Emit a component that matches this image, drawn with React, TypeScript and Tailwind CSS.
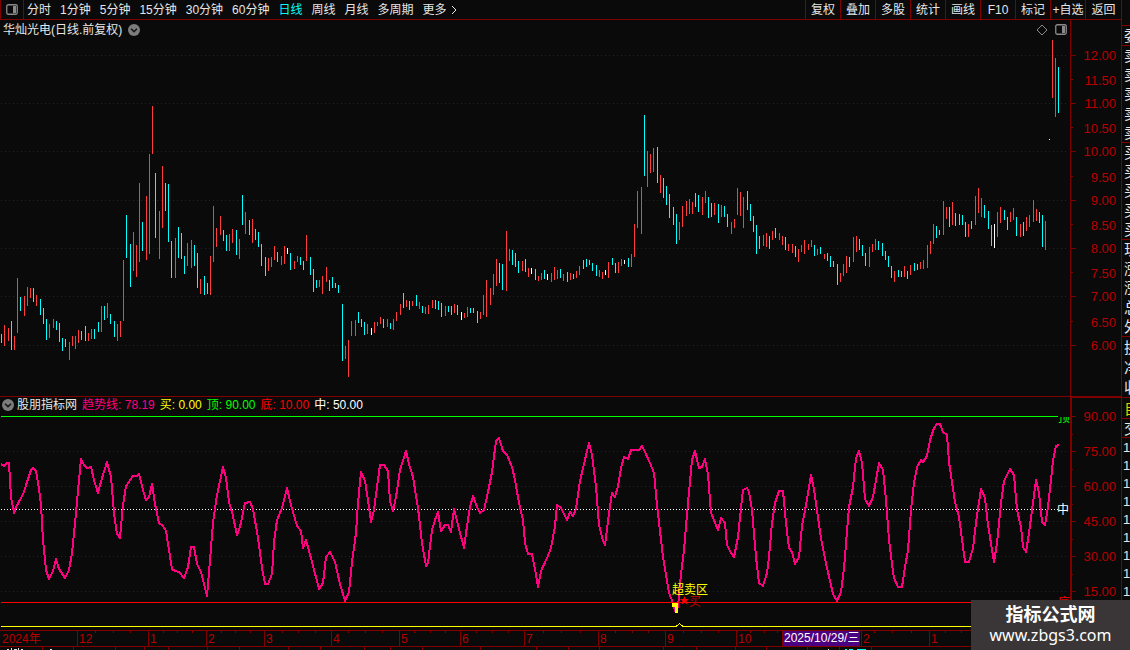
import React from "react";

const UI_FONT = "font-['Liberation_Sans','Noto_Sans_CJK_SC',sans-serif]";

const PERIODS = ["分时", "1分钟", "5分钟", "15分钟", "30分钟", "60分钟", "日线", "周线", "月线", "多周期"];
const TOOLS = ["复权", "叠加", "多股", "统计", "画线", "F10", "标记", "+自选", "返回"];

const INDICATORS = [
  { name: "趋势线", value: "78.19", tone: "text-[#ff0080]" },
  { name: "买", value: "0.00", tone: "text-[#ffff00]" },
  { name: "顶", value: "90.00", tone: "text-[#00ff00]" },
  { name: "底", value: "10.00", tone: "text-[#ff0000]" },
  { name: "中", value: "50.00", tone: "text-white" },
];

// Each bar: x, top, bottom, colour key (r = up, c = down, w = flat)
const BARS = `1 334 343 c,4 325 346 r,8 328 341 r,11 321 350 c,14 336 350 r,17 278 333 r,20 297 311 c,24 296 316 r,27 287 306 r,30 288 298 r,33 288 302 c,36 295 306 r,40 299 315 c,43 308 324 c,46 319 340 c,49 324 338 r,53 319 328 r,56 321 330 c,59 323 342 c,62 338 351 c,65 339 347 c,69 342 360 r,72 336 346 r,75 336 349 r,78 330 343 r,81 331 340 c,85 326 341 c,88 333 341 r,91 329 339 r,94 329 339 c,98 322 332 c,101 306 332 r,104 306 320 c,107 303 318 r,110 314 324 c,114 321 337 c,117 324 341 r,120 321 337 r,123 260 321 r,126 215 258 c,130 244 287 c,133 232 271 r,136 245 277 r,139 183 262 r,142 222 251 c,146 196 260 r,149 154 254 r,152 106 154 r,155 173 238 c,159 211 259 r,162 166 228 r,165 183 211 c,168 184 242 c,171 241 278 c,175 238 278 r,178 227 258 c,181 233 259 c,184 256 274 c,187 243 266 r,191 240 268 r,194 245 266 c,197 253 288 c,200 279 294 r,204 276 295 c,207 283 294 c,210 256 295 r,213 206 262 r,216 228 247 r,220 216 235 r,223 230 241 c,226 235 251 c,229 234 251 r,232 229 243 r,236 230 255 c,239 239 259 r,242 195 225 c,245 212 234 r,249 220 235 c,252 219 243 r,255 229 240 c,258 232 247 c,261 244 266 c,265 257 276 c,268 258 271 r,271 257 267 r,274 246 260 r,277 252 262 c,281 256 265 r,284 246 264 r,287 248 254 w,290 253 270 c,294 261 269 r,297 256 262 r,300 257 265 c,303 261 270 c,306 235 261 r,310 257 275 c,313 269 292 c,316 280 288 c,319 280 287 r,322 276 294 r,326 267 282 r,329 280 291 c,332 277 288 c,335 283 288 c,338 285 293 c,342 304 361 c,345 346 359 r,348 340 377 r,351 321 336 r,355 320 336 r,358 312 323 c,361 319 327 c,364 322 335 c,367 324 334 r,371 328 335 w,374 322 333 r,377 322 326 r,380 317 324 r,383 319 328 c,387 319 327 r,390 323 329 c,393 319 330 r,396 312 321 r,400 304 315 r,403 293 308 c,406 300 307 r,409 301 310 c,412 301 306 r,416 295 306 c,419 302 309 r,422 306 313 c,425 307 314 r,428 305 314 r,432 300 308 r,435 300 309 c,438 301 310 c,441 303 317 c,445 306 316 r,448 306 312 c,451 306 315 c,454 304 313 r,457 305 315 c,461 312 320 w,464 313 318 r,467 307 317 r,470 308 313 c,473 308 313 c,477 311 323 c,480 312 319 r,483 295 315 r,486 280 317 r,490 288 305 r,493 274 295 r,496 259 286 r,499 263 283 c,502 264 290 c,506 231 291 r,509 249 261 r,512 250 265 c,515 253 267 c,518 261 273 c,522 261 271 r,525 259 272 c,528 268 277 r,531 268 274 w,535 269 280 c,538 276 281 r,541 273 280 r,544 270 279 c,547 274 280 w,551 273 282 r,554 267 280 r,557 270 279 r,560 269 278 c,563 274 281 r,567 272 282 c,570 273 280 r,573 274 279 c,576 271 278 r,579 266 275 r,583 260 269 c,586 259 267 c,589 260 265 c,592 263 271 c,596 265 276 c,599 270 277 r,602 272 279 r,605 270 275 w,608 262 278 r,612 258 265 c,615 263 273 c,618 262 273 r,621 259 266 r,624 260 264 w,628 258 267 c,631 254 267 r,634 224 257 r,637 191 228 r,641 187 234 r,644 115 176 c,647 151 187 r,650 154 173 r,653 148 172 r,657 147 183 c,660 175 193 r,663 178 198 c,666 186 205 c,669 194 218 c,673 207 225 c,676 214 244 c,679 222 240 r,682 206 227 r,686 201 216 r,689 199 214 r,692 202 214 r,695 193 207 c,698 195 212 c,702 197 215 r,705 191 203 r,708 197 218 c,711 203 217 c,714 203 215 r,718 204 223 c,721 205 217 r,724 206 217 c,727 214 227 c,731 222 234 r,734 219 228 r,737 188 215 r,740 192 216 r,743 197 228 r,747 191 210 c,750 204 221 c,753 216 232 c,756 225 254 c,759 236 249 c,763 235 246 r,766 233 247 r,769 236 249 c,772 231 240 r,775 228 238 c,779 233 240 r,782 236 245 r,785 237 250 c,788 244 251 r,792 244 253 r,795 246 257 c,798 249 262 r,801 245 252 r,804 240 254 r,808 244 250 r,811 240 247 r,814 245 256 c,817 249 255 r,820 247 254 c,824 254 259 r,827 253 261 c,830 256 267 c,833 261 267 c,837 264 285 c,840 273 282 r,843 264 276 r,846 256 273 r,849 257 267 c,853 237 262 r,856 236 252 r,859 239 250 c,862 245 256 c,865 253 266 c,869 247 267 r,872 244 252 r,875 239 250 r,878 241 250 c,882 243 256 c,885 251 260 c,888 256 267 c,891 266 278 c,894 271 282 r,898 270 277 c,901 271 277 c,904 266 277 r,907 271 279 c,910 265 275 r,914 263 271 c,917 264 270 c,920 262 269 r,923 260 269 r,927 245 268 r,930 241 254 r,933 224 244 r,936 226 238 c,939 230 235 c,943 201 235 r,946 207 219 r,949 207 227 c,952 202 225 r,955 213 226 c,959 214 225 c,962 215 225 c,965 222 237 c,968 224 237 r,971 221 229 c,975 196 225 r,978 188 213 r,981 198 217 r,984 205 218 c,988 211 229 c,991 225 246 c,994 224 248 w,997 212 237 r,1000 207 223 r,1004 210 220 c,1007 217 230 c,1010 212 222 r,1013 208 220 r,1016 217 236 c,1020 224 237 r,1023 222 236 c,1026 217 231 r,1029 215 227 r,1033 200 222 r,1036 209 221 r,1039 212 223 c,1042 215 247 c,1045 221 250 r,1049 139 140 w,1052 40 98 r,1055 58 117 r,1058 67 113 c`
  .split(",")
  .map((row) => {
    const [x, top, bottom, kind] = row.split(" ");
    return { x: +x, top: +top, bottom: +bottom, kind };
  });

const BAR_FILL: Record<string, string> = { r: "#ff3c3c", c: "#00ffff", w: "#ffffff" };

const TREND =
  "1,464 4,466 7,463 9,463 11,497 14,513 16,507 21,498 24,492 27,482 31,470 33,468 36,471 39,489 41,505 43,540 46,570 49,579 53,571 56,559 59,569 65,578 69,570 72,553 76,513 79,480 81,459 84,465 87,468 91,467 94,480 98,493 102,478 107,462 111,477 114,513 117,534 120,538 123,505 126,486 133,476 137,476 139,474 143,490 146,500 149,497 152,484 155,504 159,523 163,526 166,531 169,550 172,569 175,571 179,572 184,578 188,567 191,547 194,547 197,564 201,572 207,596 210,560 213,523 217,495 223,467 226,478 229,502 232,512 237,535 240,527 245,503 250,502 253,509 258,538 262,568 265,584 268,584 272,574 274,542 277,520 282,508 287,488 291,505 297,526 301,531 303,548 306,540 312,562 319,589 323,583 326,557 330,552 335,562 340,584 345,601 349,592 352,562 356,533 358,503 361,472 365,481 368,500 371,522 374,510 377,487 380,465 384,465 388,471 390,501 393,511 396,497 400,470 406,451 409,464 413,477 418,508 422,543 426,566 428,563 432,530 436,517 438,512 441,531 445,525 448,525 451,532 454,509 458,525 464,548 467,526 470,507 473,496 477,507 480,513 484,510 488,492 492,472 496,441 499,438 503,451 507,455 512,467 515,480 519,503 523,520 525,543 528,554 532,554 535,569 538,587 541,571 547,558 551,548 555,526 557,505 561,508 567,520 570,512 573,516 576,509 580,481 583,468 589,443 592,455 596,487 599,525 603,541 605,545 609,513 612,493 615,497 618,486 621,468 624,457 628,459 631,450 639,450 642,446 645,452 650,463 654,473 657,505 663,557 669,593 673,603 675,611 678,607 680,583 684,550 688,503 692,460 695,451 699,468 702,467 705,459 708,475 711,513 718,530 721,518 725,523 727,545 731,553 734,557 738,537 741,508 743,490 747,488 749,492 752,510 756,557 759,583 763,586 767,573 769,557 772,523 775,503 779,491 783,491 786,523 789,548 792,552 795,564 799,557 802,526 806,505 811,475 814,489 817,510 821,538 827,568 833,594 837,601 841,592 844,568 849,507 853,487 856,458 859,451 862,463 865,499 869,506 873,497 879,463 883,470 886,500 889,540 892,564 894,578 898,587 902,587 905,567 908,550 911,510 914,483 917,467 921,460 923,462 927,456 930,440 934,428 937,424 940,424 943,432 947,435 949,462 952,482 955,502 959,517 965,562 969,562 973,548 977,515 981,489 985,498 988,525 994,562 997,543 1001,503 1004,481 1010,469 1014,475 1017,510 1021,527 1023,547 1026,552 1029,533 1036,480 1039,493 1042,522 1045,525 1048,507 1051,480 1053,460 1056,446 1059,445";

const PRICE_AXIS = [
  [55, "12.00"], [79, "11.50"], [103, "11.00"], [127, "10.50"], [151, "10.00"], [176, "9.50"], [200, "9.00"],
  [224, "8.50"], [248, "8.00"], [272, "7.50"], [296, "7.00"], [321, "6.50"], [345, "6.00"],
] as [number, string][];

const OSC_AXIS = [
  [416, "90.00"], [451, "75.00"], [486, "60.00"], [521, "45.00"], [556, "30.00"], [591, "15.00"],
] as [number, string][];

const MONTHS = [
  [77, "12"], [148, "1"], [206, "2"], [264, "3"], [331, "4"], [399, "5"], [460, "6"], [524, "7"],
  [598, "8"], [665, "9"], [736, "10"], [782, ""], [861, "2"], [929, "1"],
] as [number, string][];

const WEEK_TICKS = [
  95, 113, 130, 163, 177, 192, 221, 235, 250, 282, 298, 315, 348, 365, 382, 414, 430, 445, 476, 492, 508,
  543, 561, 580, 615, 632, 648, 683, 701, 718, 750, 764, 777, 874, 892, 911, 945, 961,
];

const TAB_EDGES = [
  42, 73, 115, 144, 168, 207, 239, 288, 320, 364, 390, 422, 480, 536, 568, 599, 663, 696, 735, 766, 807, 839, 871,
];

const QUOTE_GROUPS = [
  { rows: ["委"], size: "h-[20px]" },
  { rows: ["卖", "卖", "卖", "卖", "卖"], size: "h-[97px]" },
  { rows: ["买", "买", "买", "买", "买"], size: "h-[97px]" },
  { rows: ["现", "涨", "涨", "总", "外"], size: "h-[97px]" },
  { rows: ["换", "净", "收"], size: "h-[61px]" },
];

function ChevronBadge({ label }: { label: string }) {
  return (
    <button type="button" aria-label={label} className="shrink-0">
      <svg viewBox="0 0 12 12" className="block size-3">
        <circle cx="6" cy="6" r="6" fill="#7c7c7c" />
        <path d="M3 4.8 6 7.6 9 4.8" fill="none" stroke="#161616" strokeWidth="1.5" />
      </svg>
    </button>
  );
}

function PanelIcon() {
  return (
    <svg viewBox="0 0 12 11" className="block h-[11px] w-3">
      <rect x="0.75" y="0.75" width="10.5" height="9.5" rx="1.5" fill="none" stroke="#8a8a8a" strokeWidth="1.3" />
      <rect x="7" y="2" width="3" height="7" fill="#8a8a8a" />
    </svg>
  );
}

function Toolbar() {
  return (
    <header className="flex h-5 items-stretch justify-between border-b border-[#800000]">
      <nav className="flex items-stretch" aria-label="周期">
        <button type="button" aria-label="侧栏" className="flex w-6 items-center justify-center border-x border-[#800000]">
          <PanelIcon />
        </button>
        <div className="flex items-center gap-[9px] pl-[3px]">
          {PERIODS.map((p) => (
            <button
              key={p}
              type="button"
              aria-pressed={p === "日线"}
              className={p === "日线" ? "whitespace-nowrap text-[#00ffff]" : "whitespace-nowrap"}
            >
              {p}
            </button>
          ))}
          <button type="button" className="flex items-center gap-1 whitespace-nowrap">
            更多
            <svg viewBox="0 0 6 10" className="block h-[10px] w-[6px]">
              <path d="M1 1 5 5 1 9" fill="none" stroke="#e6e6e6" />
            </svg>
          </button>
        </div>
      </nav>
      <div className="flex">
        {TOOLS.map((t) => (
          <button key={t} type="button" className="w-[35px] whitespace-nowrap border-l border-[#800000] text-center last:w-9">
            {t}
          </button>
        ))}
      </div>
    </header>
  );
}

function GridLine({ y }: { y: number }) {
  return <path d={`M1 ${y + 0.5}H1068`} stroke="#780000" strokeDasharray="1 3" />;
}

function AxisLabel({ y, children }: { y: number; children: string }) {
  return (
    <text x="1116" y={y + 5} textAnchor="end" fill="#b80000" className="text-[13px]">
      {children}
    </text>
  );
}

function PriceChart() {
  return (
    <svg viewBox="0 40 1121 356" className="block h-auto w-full" role="img" aria-label="日线走势">
      <g shapeRendering="crispEdges">
        {PRICE_AXIS.map(([y], i) => (i % 2 === 0 ? <GridLine key={y} y={y} /> : null))}
        {BARS.map((b) => (
          <rect key={b.x} x={b.x} y={b.top} width="1" height={b.bottom - b.top} fill={BAR_FILL[b.kind]} />
        ))}
        <rect x="1070" y="40" width="1" height="356" fill="#800000" />
        {PRICE_AXIS.map(([y], i) => (
          <rect key={y} x="1071" y={y} width={i % 2 === 0 ? 5 : 2} height="1" fill="#800000" />
        ))}
      </g>
      {PRICE_AXIS.map(([y, label], i) => (
        <AxisLabel key={label} y={i % 2 === 0 ? y : y + 1}>
          {label}
        </AxisLabel>
      ))}
    </svg>
  );
}

function TrendChart() {
  return (
    <svg
      viewBox="0 414 1121 236"
      className="relative block h-auto w-full overflow-visible text-[12px]"
      role="img"
      aria-label="趋势线指标"
    >
      <defs>
        <clipPath id="top-mark">
          <rect x="1056" y="417" width="14" height="10" />
        </clipPath>
      </defs>
      <g shapeRendering="crispEdges">
        {OSC_AXIS.slice(1).map(([y]) => (
          <GridLine key={y} y={y} />
        ))}
        <rect x="1" y="416" width="1057" height="1" fill="#00ff00" />
        <path d="M1 509.5H1058" stroke="#ffffff" strokeDasharray="1 2" />
        <polyline points={TREND} fill="none" stroke="#ff0080" strokeWidth="2" strokeLinejoin="round" />
        <rect x="1" y="602" width="1057" height="1" fill="#ff0000" />
        <path d="M1 626.5H676L679.500 623.500 683 626.5H1058" fill="none" stroke="#ffff00" />
        <path d="M672 603h6v10h-3v-6h-3z" fill="#ffff00" />
        <rect x="1070" y="414" width="2" height="216" fill="#800000" />
        {OSC_AXIS.map(([y]) => (
          <React.Fragment key={y}>
            <rect x="1072" y={y} width="4" height="1" fill="#800000" />
            <rect x="1072" y={y + 18} width="1" height="1" fill="#800000" />
          </React.Fragment>
        ))}
        <rect x="0" y="630" width="1121" height="1" fill="#800000" />
        <rect x="0" y="646" width="1121" height="1" fill="#800000" />
        {WEEK_TICKS.map((x) => (
          <rect key={x} x={x} y="631" width="1" height="2" fill="#800000" />
        ))}
        {MONTHS.map(([x]) => (
          <rect key={x} x={x} y="631" width="1" height="15" fill="#800000" />
        ))}
        {TAB_EDGES.map((x) => (
          <rect key={x} x={x} y="647" width="1" height="3" fill="#800000" />
        ))}
        <path d="M7 649h2v1h-2zM11 648h1v2h-1zM14 649h3v1h-3zM18 648h1v2h-1zM21 649h2v1h-2zM50 649h2v1h-2zM828 649h1v1h-1z" fill="#e6e6e6" />
        <path d="M845 649h2v1h-2zM849 649h4v1h-4zM857 649h9v1h-9z" fill="#00ffff" />
        <rect x="783" y="631" width="77" height="15" fill="#4b0082" />
      </g>
      <text x="672" y="594" fill="#ffff00">超卖区</text>
      <path d="m684.500 596 1.300 3h3.200l-2.500 2 1 3.500-3-2-3 2 1-3.500-2.500-2h3.200z" fill="#ff0000" />
      <text x="689" y="606" fill="#c80000">买</text>
      <text x="1058" y="422" fill="#00ff00" clipPath="url(#top-mark)">顶</text>
      <text x="1057" y="514" fill="#ffffff">中</text>
      <text x="1058" y="607" fill="#ff0000">底</text>
      {OSC_AXIS.map(([y, label]) => (
        <AxisLabel key={label} y={y}>
          {label}
        </AxisLabel>
      ))}
      <text x="2" y="643" fill="#b80000">2024年</text>
      {MONTHS.map(([x, label]) => (
        <text key={x} x={x + 2} y="643" fill="#b80000">
          {label}
        </text>
      ))}
      <text x="784" y="642" fill="#ffffff">2025/10/29/三</text>
    </svg>
  );
}

function QuoteStrip() {
  return (
    <aside className="w-[9px] shrink-0 overflow-hidden border-l border-[#800000] pt-[25px] text-[15px] leading-none">
      {QUOTE_GROUPS.map((g, i) => (
        <div key={i} className={`flex flex-col justify-around border-t border-[#800000] pl-0.5 ${g.size}`}>
          {g.rows.map((r, j) => (
            <span key={j} className="whitespace-nowrap">
              {r}
            </span>
          ))}
        </div>
      ))}
      <div className="flex h-[21px] items-center border-t border-[#800000] pl-0.5 text-[#e0d000]">
        <span className="whitespace-nowrap">自</span>
      </div>
      <div className="flex h-[19px] items-center border-t border-[#800000] pl-0.5">
        <span className="whitespace-nowrap">交</span>
      </div>
      <div className="border-t border-[#800000] pl-px text-[13px]">
        {Array.from({ length: 9 }, (_, i) => (
          <div key={i} className="flex h-[18px] items-center">
            1
          </div>
        ))}
      </div>
    </aside>
  );
}

export default function App() {
  return (
    <div className={`relative flex w-full overflow-hidden bg-[#0a0a0a] text-[12px] leading-[18px] text-[#e6e6e6] ${UI_FONT}`}>
      <main className="min-w-0 flex-1">
        <Toolbar />
        <div className="flex h-5">
          <div className="flex flex-1 items-center gap-1.5 px-[3px] pb-px">
            <h1 className="whitespace-nowrap">华灿光电(日线.前复权)</h1>
            <ChevronBadge label="选择股票" />
            <div className="ml-auto flex items-center gap-[7px]">
              <svg viewBox="0 0 12 12" className="block size-3">
                <path d="M6 1 11 6 6 11 1 6Z" fill="none" stroke="#8a8a8a" />
              </svg>
              <PanelIcon />
            </div>
          </div>
          <div className="w-[51px] border-l border-[#800000]" />
        </div>
        <PriceChart />
        <div className="flex h-[18px] border-t border-[#800000]">
          <div className="flex flex-1 items-center gap-[5px] pb-0.5 pl-0.5">
            <div className="flex items-center gap-[3px]">
              <ChevronBadge label="选择指标" />
              <h2 className="whitespace-nowrap">股朋指标网</h2>
            </div>
            {INDICATORS.map((i) => (
              <span key={i.name} className={`whitespace-nowrap ${i.tone}`}>
                {i.name}: {i.value}
              </span>
            ))}
          </div>
          <div className="w-[51px] border-l-2 border-t border-[#800000]" />
        </div>
        <TrendChart />
      </main>
      <QuoteStrip />
      <div className="absolute bottom-0 right-0 flex h-[50px] w-[159px] flex-col items-center justify-center bg-[#3a3637] text-white">
        <strong className="text-[18px] font-bold leading-5">指标公式网</strong>
        <span className="font-['Noto_Sans',sans-serif] text-[16px] leading-5">www.zbgs3.com</span>
      </div>
    </div>
  );
}
